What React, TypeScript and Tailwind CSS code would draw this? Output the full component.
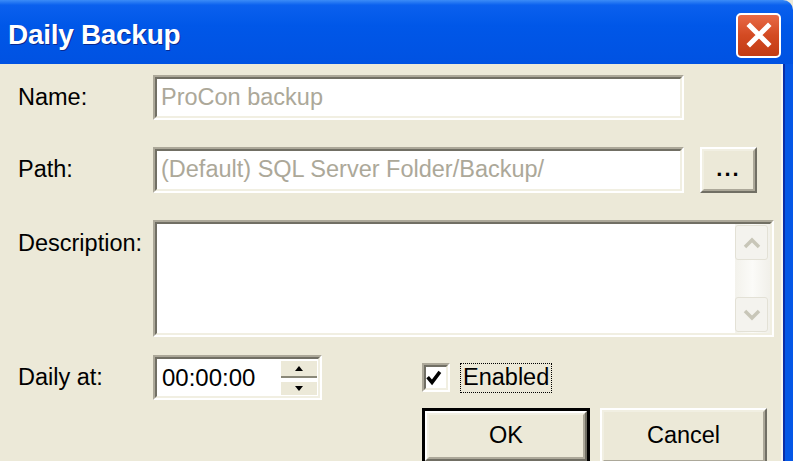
import React from "react";

function Sunken({ className, children }: { className: string; children?: React.ReactNode }) {
  return (
    <div className={`border-2 border-t-[#aca899] border-l-[#aca899] border-b-white border-r-white ${className}`}>
      <div className="w-full h-full border-2 border-t-[#716f64] border-l-[#716f64] border-b-[#f1efe2] border-r-[#f1efe2] bg-white flex items-center">
        {children}
      </div>
    </div>
  );
}

function Raised({ className, children }: { className: string; children?: React.ReactNode }) {
  return (
    <div className={`border-2 border-t-white border-l-white border-b-[#716f64] border-r-[#716f64] ${className}`}>
      <div className="w-full h-full border-2 border-t-[#f1efe2] border-l-[#f1efe2] border-b-[#aca899] border-r-[#aca899] bg-[#ece9d8] flex items-center justify-center">
        {children}
      </div>
    </div>
  );
}

function ScrollBtn({ up }: { up: boolean }) {
  return (
    <div className="w-[33px] h-[35px] rounded-[3px] border border-[#e3e1d6] bg-[#f4f3ee] flex items-center justify-center">
      <svg width="18" height="12" viewBox="0 0 18 12">
        <polyline
          points={up ? "2,10 9,3 16,10" : "2,2 9,9 16,2"}
          fill="none"
          stroke="#c8c6b8"
          strokeWidth="3.5"
        />
      </svg>
    </div>
  );
}

export default function App() {
  return (
    <div className="w-[793px] h-[461px] overflow-hidden flex flex-col bg-[#ece9d8] font-['Liberation_Sans',Arial,sans-serif] text-black">
      {/* Title bar */}
      <div className="h-[64px] shrink-0 flex items-center pl-[8px] pr-[12px] rounded-tr-[10px] bg-[linear-gradient(to_bottom,#3b8cf7_0%,#0a60ee_8%,#0057e8_40%,#0052e2_100%)]">
        <div className="flex-1 text-white font-bold text-[28px] leading-none pt-[6px] tracking-[-0.3px] [text-shadow:1px_1px_0_#0a2a90]">
          Daily Backup
        </div>
        <div className="w-[45px] h-[45px] mt-[6px] rounded-[5px] border-2 border-white bg-[linear-gradient(to_bottom,#e86a47,#d34a22_50%,#c23c14)] flex items-center justify-center">
          <svg width="26" height="26" viewBox="0 0 26 26">
            <path d="M4 4 L22 22 M22 4 L4 22" stroke="white" strokeWidth="5" strokeLinecap="square" />
          </svg>
        </div>
      </div>

      {/* Body */}
      <div className="flex flex-1 min-h-0">
        <div className="flex-1 flex flex-col pl-[18px] pt-[11px] text-[23.5px] leading-none">
          {/* Name */}
          <div className="flex items-center h-[45px]">
            <div className="w-[135px]">Name:</div>
            <Sunken className="w-[531px] h-[45px]">
              <span className="pl-[4px] text-[#aca899]">ProCon backup</span>
            </Sunken>
          </div>

          {/* Path */}
          <div className="flex items-center h-[46px] mt-[27px]">
            <div className="w-[135px]">Path:</div>
            <Sunken className="w-[531px] h-[46px]">
              <span className="pl-[4px] text-[#aca899]">(Default) SQL Server Folder/Backup/</span>
            </Sunken>
            <Raised className="ml-[16px] w-[57px] h-[46px]">
              <span className="font-bold text-[22px] tracking-[2px] pb-[2px]">...</span>
            </Raised>
          </div>

          {/* Description */}
          <div className="flex items-start mt-[27px]">
            <div className="w-[135px] pt-[12px]">Description:</div>
            <Sunken className="w-[621px] h-[117px]">
              <div className="flex-1" />
              <div className="w-[35px] h-full flex flex-col justify-between py-[1px] pr-[2px] bg-[linear-gradient(to_right,#f3f2ec,#fbfbf8,#f1f0ea)]">
                <ScrollBtn up={true} />
                <ScrollBtn up={false} />
              </div>
            </Sunken>
          </div>

          {/* Daily at + Enabled */}
          <div className="flex items-center h-[45px] mt-[18px]">
            <div className="w-[135px]">Daily at:</div>
            <Sunken className="w-[169px] h-[45px]">
              <span className="flex-1 pl-[5px] text-[24px]">00:00:00</span>
              <div className="w-[37px] h-full flex flex-col justify-center gap-[3px] pr-[1px]">
                <div className="h-[17px] border-b-2 border-[#8a8878] bg-[#ece9d8] flex items-center justify-center">
                  <svg width="8" height="5" viewBox="0 0 8 5"><path d="M4 0 L8 5 L0 5 Z" fill="black" /></svg>
                </div>
                <div className="h-[14px] bg-[#ece9d8] border-t border-white flex items-center justify-center">
                  <svg width="8" height="5" viewBox="0 0 8 5"><path d="M0 0 L8 0 L4 5 Z" fill="black" /></svg>
                </div>
              </div>
            </Sunken>
            <Sunken className="ml-[100px] w-[28px] h-[29px]">
              <svg width="24" height="24" viewBox="0 0 24 24" className="ml-[-1px]">
                <polyline points="3,11 8,17 17,5" fill="none" stroke="black" strokeWidth="4" />
              </svg>
            </Sunken>
            <div className="ml-[10px] w-[92px] h-[30px] border border-dotted border-black flex items-center pl-[2px]">
              Enabled
            </div>
          </div>

          {/* Buttons */}
          <div className="flex mt-[8px] pl-[404px]">
            <div className="border-[3px] border-black">
              <Raised className="w-[162px] h-[50px]">
                <span>OK</span>
              </Raised>
            </div>
            <Raised className="ml-[10px] w-[167px] h-[56px]">
              <span>Cancel</span>
            </Raised>
          </div>
        </div>
        <div className="w-[12px] shrink-0 flex">
          <div className="w-[2px] bg-[#f7f6f0]" />
          <div className="w-[2px] bg-[#0a2ea8]" />
          <div className="flex-1 bg-[#0557e6]" />
        </div>
      </div>
    </div>
  );
}
